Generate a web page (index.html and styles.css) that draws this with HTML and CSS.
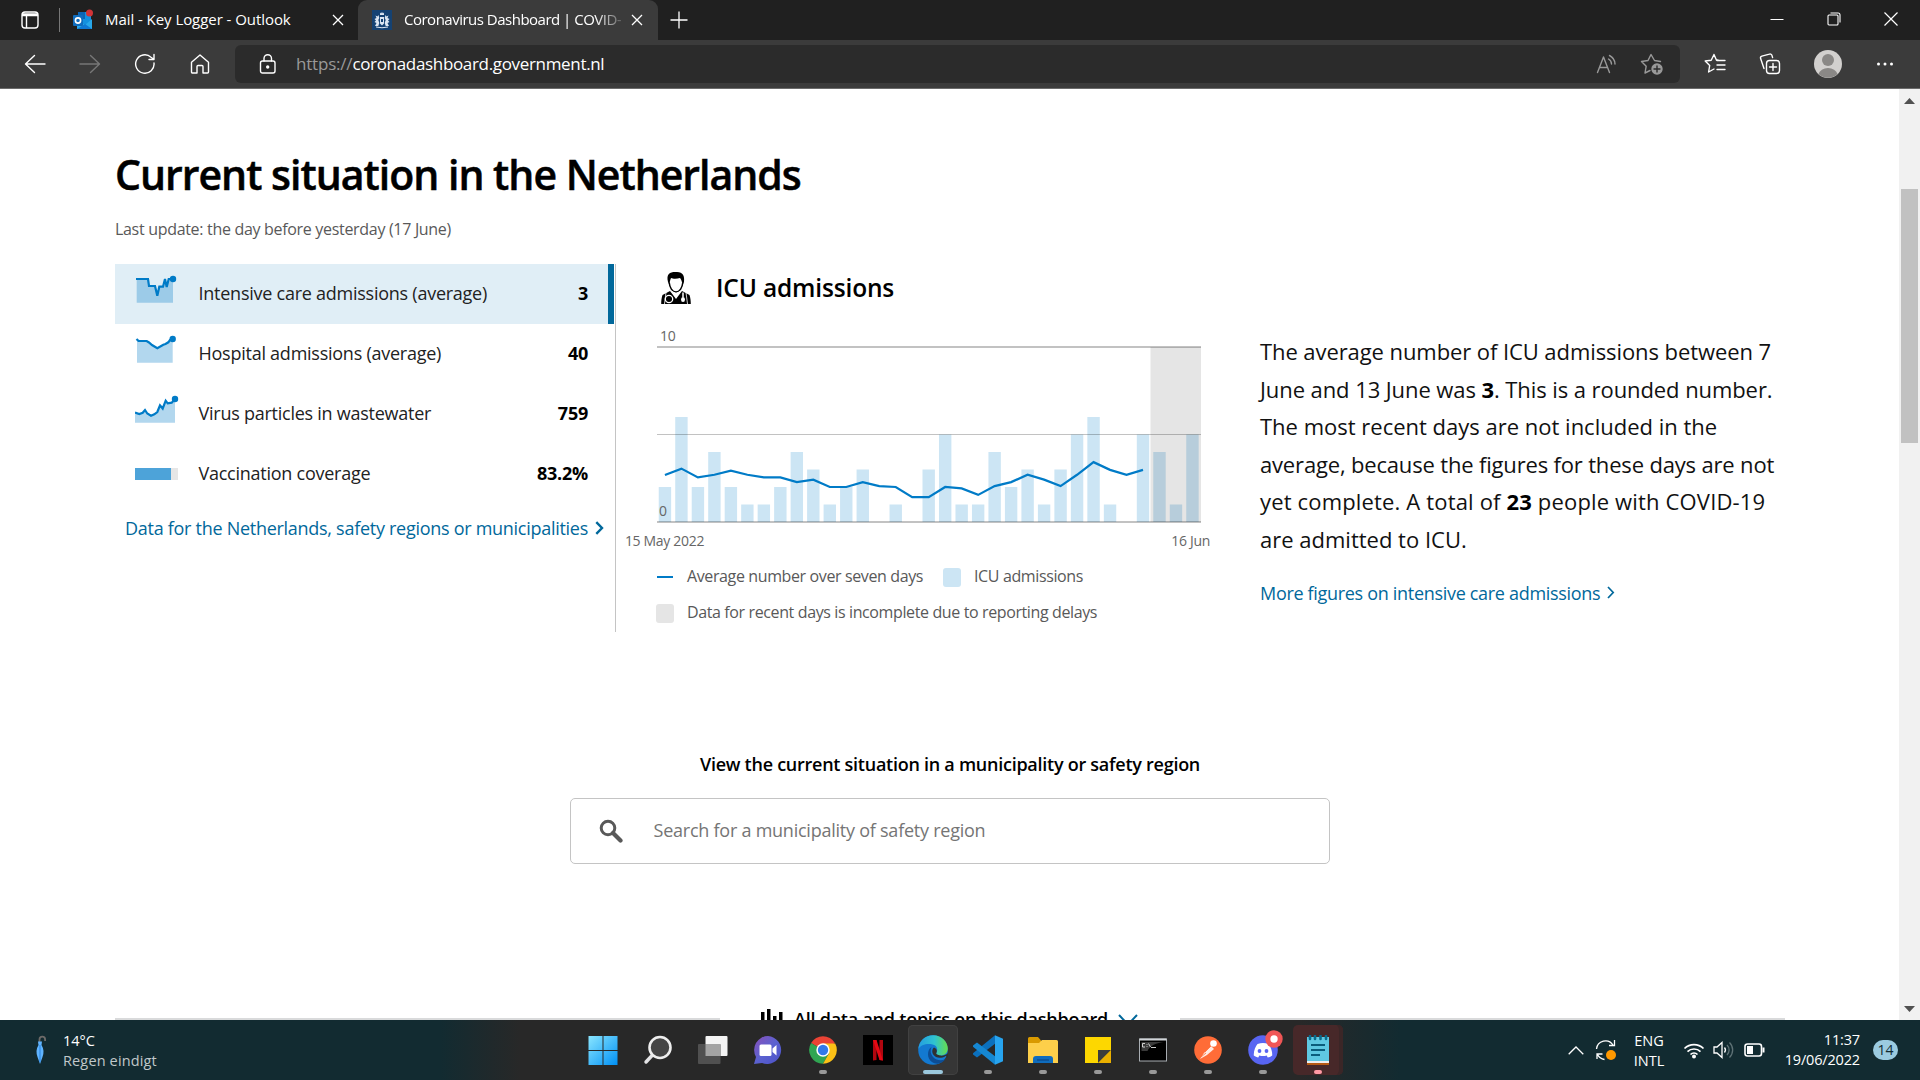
FILE: index.html
```
<!DOCTYPE html>
<html lang="en">
<head>
<meta charset="utf-8">
<title>Coronavirus Dashboard | COVID-19</title>
<link rel="stylesheet" href="styles.css">
</head>
<body>
<div class="screen">
  <header class="tabstrip">
    <div class="tabmenu"><svg width="18" height="18" viewBox="0 0 18 18" fill="none" stroke="#fff" stroke-width="1.4"><rect x="1" y="1" width="16" height="16" rx="3"/><path d="M1 4.500h16M1 3h16M5.500 5v12"/></svg></div>
    <div class="tab">
      <svg class="favicon" width="22" height="22" viewBox="0 0 22 22"><path d="M6 3h13v14H6z" fill="#1490df"/><path d="M6 3h7v7H6z" fill="#0a64b4"/><path d="M5 11l8 5 7-6v10H5z" fill="#28a8ea"/><path d="M5 20l8-5 7 5z" fill="#0f78d4"/><rect x="1" y="6" width="10" height="11" rx="1" fill="#0f6cbd"/><circle cx="6" cy="11.500" r="2.600" fill="none" stroke="#fff" stroke-width="1.600"/><circle cx="17.500" cy="4" r="3.500" fill="#d13438"/></svg>
      <span class="tab-title">Mail - Key Logger - Outlook</span>
      <svg class="close" width="12" height="12" viewBox="0 0 12 12" stroke="#fff" stroke-width="1.300"><path d="M1 1l10 10M11 1L1 11"/></svg>
    </div>
    <div class="tab active">
      <svg class="favicon" width="20" height="20" viewBox="0 0 20 20"><rect width="20" height="20" fill="#154273"/><g fill="#dce6f2"><path d="M8 2.500l1 1 1-1.500 1 1.500 1-1V5H8zM8 7h4v6.500l-2 2-2-2z"/><path d="M3.500 5.500l2 1L6.500 5l.8 3-1 2 1 3-1 3H3l1.500-3L2.500 12l1.500-1.500L2.500 9l2-1zM16.500 5.500l-2 1L13.500 5l-.8 3 1 2-1 3 1 3H17l-1.500-3 2-1-1.500-1.500L17.500 9l-2-1z"/><path d="M4 16.500l6 .8 6-.8v1l-6 .8-6-.8z"/></g><path d="M9 9h2v3H9z" fill="#154273"/></svg>
      <span class="tab-title fade">Coronavirus Dashboard | COVID-</span>
      <svg class="close" width="12" height="12" viewBox="0 0 12 12" stroke="#fff" stroke-width="1.300"><path d="M1 1l10 10M11 1L1 11"/></svg>
    </div>
    <div class="newtab"><svg width="18" height="18" viewBox="0 0 18 18" stroke="#fff" stroke-width="1.300"><path d="M9 0.500v17M0.500 9h17"/></svg></div>
    <div class="window-controls">
      <svg width="14" height="14" viewBox="0 0 14 14" stroke="#fff" fill="none"><path d="M0.500 7.500h13"/></svg>
      <svg width="14" height="14" viewBox="0 0 14 14" stroke="#fff" fill="none" stroke-width="1.100"><rect x="1" y="3" width="10" height="10" rx="1"/><path d="M3.500 1H11a2 2 0 0 1 2 2v7.500"/></svg>
      <svg width="14" height="14" viewBox="0 0 14 14" stroke="#fff" stroke-width="1.200"><path d="M0.500 0.500l13 13M13.500 0.500l-13 13"/></svg>
    </div>
  </header>

  <nav class="toolbar">
    <div class="nav">
      <svg width="22" height="20" viewBox="0 0 22 20" class="ic"><path d="M21 10H2M10.500 1.500L1.500 10l9 8.500"/></svg>
      <svg width="22" height="20" viewBox="0 0 22 20" class="ic dim"><path d="M1 10h19M11.500 1.500l9 8.500-9 8.500"/></svg>
      <svg width="22" height="22" viewBox="0 0 22 22" class="ic"><path d="M20 10a9.200 9.200 0 1 1-3-5.800L19.500 6M20 1.500V6.500h-5"/></svg>
      <svg width="22" height="22" viewBox="-1 0 22 22" class="ic"><path d="M1.500 9.300L10 2l8.500 7.300V19a1 1 0 0 1-1 1H13v-6.500a1 1 0 0 0-1-1H8a1 1 0 0 0-1 1V20H2.500a1 1 0 0 1-1-1z"/></svg>
    </div>
    <div class="address">
      <svg width="18" height="22" viewBox="0 0 18 22" class="ic"><rect x="1.500" y="8" width="14.500" height="12" rx="2"/><path d="M5 8V5.500a3.700 3.700 0 0 1 7.500 0V8"/><circle cx="8.700" cy="14" r="1" fill="#fff"/></svg>
      <span class="url"><span class="scheme">https://</span>coronadashboard.government.nl</span>
      <div class="address-icons">
        <svg width="22" height="20" viewBox="0 0 22 20" class="ic grey"><path d="M1.500 18.500L7.500 3l6 15.500M3.500 13.500h8M12.500 5a6 6 0 0 1 3 5M13.500 1.500a10 10 0 0 1 5.500 8.500"/></svg>
        <svg width="24" height="22" viewBox="0 0 24 22" class="ic grey"><path d="M20.500 8.500l-6-1L11 1.500 8 7.500l-6.500 1 4.700 4.700L5 20l5-2.500"/><circle cx="17" cy="16" r="5" fill="#999"/><path d="M17 13v6M14 16h6" stroke="#2b2b2b"/></svg>
      </div>
    </div>
    <div class="tools">
      <svg width="22" height="22" viewBox="0 0 22 22" class="ic"><path d="M14 7L12.500 7.200 10 1.500 7.200 7.200 1.200 8l4.500 4.500L4.600 19l5.400-3M13 7.500h8M13 12h8M13 16.500h8"/></svg>
      <svg width="22" height="22" viewBox="0 0 22 22" class="ic"><rect x="7.500" y="7.500" width="13" height="13" rx="3"/><path d="M14 10.500v7M10.500 14h7M5 15.500L1.600 5.600a2 2 0 0 1 1.300-2.500l7.500-2a2 2 0 0 1 2.600 1.500l.6 2"/></svg>
      <svg width="30" height="30" viewBox="0 0 30 30"><circle cx="15" cy="15" r="14" fill="#d2d0ce"/><circle cx="15" cy="11" r="6" fill="#8a8886"/><path d="M5.500 25a9.700 7.500 0 0 1 19 0 14 14 0 0 1-19 0z" fill="#8a8886"/></svg>
      <svg width="18" height="6" viewBox="0 0 18 6" fill="#fff"><circle cx="2.500" cy="3" r="1.500"/><circle cx="9" cy="3" r="1.500"/><circle cx="15.500" cy="3" r="1.500"/></svg>
    </div>
  </nav>

  <div class="viewport">
    <main class="page">
      <h1>Current situation in the Netherlands</h1>
      <p class="updated">Last update: the day before yesterday (17 June)</p>
      <section class="overview">
        <div class="topics">
          <a class="topic selected">
            <svg width="45" height="60" viewBox="0 -10 45 60"><path d="M1.700 5H13l1 7h6l2.300 9.700 2-9H28L30 5l1.700 8 2-8H38v23.700H1.700z" fill="#007bc7" fill-opacity=".3"/><path class="spark" d="M1 5H13l1 7h6l2.300 9.700 2-9H28L30 5l1.700 8 2-8H38"/><circle cx="38" cy="5" r="3.200" fill="#007bc7"/></svg>
            <span>Intensive care admissions (average)</span><b>3</b>
          </a>
          <a class="topic">
            <svg width="45" height="60" viewBox="0 -10 45 60"><path d="M2 5.500V28.700H37.700V5L33 8.300 28.300 10.700 22.300 14.300 16.700 11 11.700 7z" fill="#007bc7" fill-opacity=".3"/><path class="spark" d="M1.500 5L3.500 7 11.700 7 14 8.500 17 11 22.300 14.300 28.300 10.700 30.500 10 33.300 8.300 35 6 37.700 5"/><circle cx="37.700" cy="5" r="3.200" fill="#007bc7"/></svg>
            <span>Hospital admissions (average)</span><b>40</b>
          </a>
          <a class="topic">
            <svg width="45" height="60" viewBox="0 -10 45 60"><path d="M0 19.300L4.300 20 7.700 18.500 10 16 12.300 19.500 16 21.700 19.300 20.300 22.300 17.700 25 11.300 27.700 14.300 30.700 6.700 32.700 9.300 36.700 8.700 40 5V28.700H0z" fill="#007bc7" fill-opacity=".3"/><path class="spark" d="M0 18.500L4.300 20 7.700 18.700 10 16 12.300 19.500 16 21.700 19.300 20.300 22.300 18 25 11.300 27.700 14.500 30.700 6.700 32.700 9.300 36.700 8.700 40 5"/><circle cx="40" cy="5" r="3.200" fill="#007bc7"/></svg>
            <span>Virus particles in wastewater</span><b>759</b>
          </a>
          <a class="topic">
            <svg width="45" height="60" viewBox="0 -10 45 60"><rect y="14" width="43" height="12" fill="#e6e6e6"/><rect y="14" width="36" height="12" fill="#4da3d9"/></svg>
            <span>Vaccination coverage</span><b>83.2%</b>
          </a>
          <a class="link all-data">Data for the Netherlands, safety regions or municipalities<svg width="9" height="14" viewBox="0 0 9 14" fill="none" stroke="#01689b" stroke-width="2.400"><path d="M1.300 1.200L7 7l-5.700 5.800"/></svg></a>
        </div>

        <div class="chart-column">
          <h2>
            <svg width="30" height="34" viewBox="0 0 30 34"><path d="M7 11C5 3 9 1 14 1c6 0 10 1 9 10l-1.500 3C21 10 20 8 19 7c-3 1-7 1-9 0-1 2-1.500 5-1.500 7z"/><path d="M8.200 11.500c.5 5 3 9.500 6.800 9.500s6.300-4.500 6.800-9.500" fill="none" stroke="#000" stroke-width="1.500"/><path d="M9 20L1.500 24C0.500 27 .2 30 .2 33h29.600c0-3-.3-6-1.300-9L21 20l-6 8z"/><path d="M11 20.500l4 5 4-5-4 2z" fill="#fff" stroke="#fff"/><path d="M5 21.500L3.500 33M25 21.500l1.500 11.500" stroke="#fff" stroke-width=".8"/><circle cx="8" cy="28" r="3.700" fill="#000" stroke="#fff" stroke-width="1.300"/><ellipse cx="22" cy="28.500" rx="2" ry="2.600" fill="#fff"/><path d="M22 21.500v5" stroke="#fff" stroke-width="1.500"/></svg>
            <span>ICU admissions</span>
          </h2>
          <svg class="chart" width="544" height="240" viewBox="657 320 544 240">
            <g id="bars" fill="#cce5f4"></g>
            <rect x="1150.500" y="347" width="50.500" height="175" fill="#000" fill-opacity=".1"/>
            <g stroke="#000" stroke-opacity=".24"><path d="M657 347h544" stroke-width="2"/><path d="M657 434.500h544"/><path d="M657 522h544" stroke-width="2"/></g>
            <polyline id="average" fill="none" stroke="#007bc7" stroke-width="2.200"/>
            <g class="axis"><text x="660" y="341">10</text><text x="659" y="516">0</text><text x="664.500" y="546" text-anchor="middle">15 May 2022</text><text x="1210" y="546" text-anchor="end">16 Jun</text></g>
          </svg>
          <ul class="legend">
            <li><i class="line"></i>Average number over seven days</li>
            <li><i class="box blue"></i>ICU admissions</li>
            <li><i class="box"></i>Data for recent days is incomplete due to reporting delays</li>
          </ul>
        </div>

        <div class="summary">
          <p><span class="snug">The average number of ICU admissions between 7</span><br><span class="snug">June and 13 June was <b>3</b>. This is a rounded number.</span><br>The most recent days are not included in the<br><span class="tight">average, because the figures for these days are not</span><br><span class="loose">yet complete. A total of <b>23</b> people with COVID-19</span><br>are admitted to ICU.</p>
          <a class="link">More figures on intensive care admissions<svg width="8" height="13" viewBox="0 0 8 13" fill="none" stroke="#01689b" stroke-width="1.700"><path d="M1 1l5.200 5.500L1 12"/></svg></a>
        </div>
      </section>

      <section class="search">
        <h3>View the current situation in a municipality or safety region</h3>
        <div class="searchbox">
          <svg width="24" height="24" viewBox="0 0 24 24" fill="none" stroke="#595959"><circle cx="9" cy="9" r="6.800" stroke-width="3"/><path d="M14 14l7.500 7.500" stroke-width="4.200" stroke-linecap="round"/></svg>
          <span>Search for a municipality of safety region</span>
        </div>
      </section>

      <section class="all-topics">
        <hr>
        <div class="toggle">
          <svg width="24" height="26" viewBox="0 0 24 26"><path d="M1 4h3.500v20H1zM7 1h3.500v23H7zM13 8h3.500v16H13zM19 4h3.500v20H19z"/></svg>
          <span>All data and topics on this dashboard</span>
          <svg class="down" width="20" height="13" viewBox="0 0 20 13" fill="none" stroke="#01689b" stroke-width="2"><path d="M1 1l9 9.500L19 1"/></svg>
        </div>
        <hr>
      </section>
    </main>
    <aside class="scrollbar">
      <svg width="11" height="6" viewBox="0 0 11 6"><path d="M5.500 0L11 6H0z" fill="#505050"/></svg>
      <div class="thumb"></div>
      <svg width="11" height="6" viewBox="0 0 11 6"><path d="M5.500 6L0 0h11z" fill="#505050"/></svg>
    </aside>
  </div>

  <footer class="taskbar">
    <div class="weather">
      <svg width="12" height="30" viewBox="0 0 12 30"><path d="M4.500 9V4.500a2.800 2.800 0 0 1 5.600 0V6" fill="none" stroke="#6d6a68" stroke-width="1.800"/><path d="M3 6.500h4l-.5 3.500C9 14 9 18 7.500 22L5 29 2.500 22C1 18 1 14 3.500 10z" fill="#60b4ff"/><path d="M5 10v17" stroke="#2f8be6" stroke-width="1.200"/></svg>
      <div><span>14°C</span><span class="muted">Regen eindigt</span></div>
    </div>
    <div class="apps">
      <div class="app"><svg viewBox="0 0 30 30"><defs><linearGradient id="win" x2="1" y2="1"><stop stop-color="#8ae6ff"/><stop offset="1" stop-color="#0090f5"/></linearGradient></defs><path d="M.5 1h14v14H.5zM15.500 1h14v14h-14zM.5 16h14v14H.5zM15.500 16h14v14h-14z" fill="url(#win)"/></svg></div>
      <div class="app"><svg viewBox="0 0 30 30"><path d="M10 19.500L3 27" stroke="#e4e4e6" stroke-width="3.400" stroke-linecap="round"/><circle cx="17" cy="12.500" r="10.500" fill="#454545" stroke="#eee" stroke-width="2.600"/></svg></div>
      <div class="app"><svg viewBox="0 0 30 30"><rect x="7.500" y="1" width="22" height="20" rx="1" fill="#f4f4f4"/><rect x="0" y="9" width="22.500" height="20" rx="1" fill="#505050"/><rect x="7.500" y="9" width="15" height="12" fill="#a4a4a4"/></svg></div>
      <div class="app"><svg viewBox="0 0 30 30"><defs><linearGradient id="chat" x2="1" y2="1"><stop stop-color="#8a4fb8"/><stop offset=".5" stop-color="#5b62d0"/><stop offset="1" stop-color="#4b50c8"/></linearGradient></defs><path d="M15 1a14 14 0 1 1-6 27L1 29l2-7A14 14 0 0 1 15 1z" fill="url(#chat)"/><rect x="6.500" y="9.500" width="12" height="11.500" rx="1.500" fill="#fff"/><path d="M19.500 13.500l4-3.500v10.500l-4-3.500z" fill="#fff"/></svg></div>
      <div class="app run"><svg viewBox="0 0 30 30"><path d="M15 15L3.100 8a13.800 13.800 0 0 1 23.800 0z" fill="#ea4335"/><path d="M15 15L3.100 8A13.800 13.800 0 0 0 15 28.800l6-10.500z" fill="#30a552"/><path d="M15 8.500h12.200A13.800 13.800 0 0 1 15 28.800l6-10.500z" fill="#fbc116"/><circle cx="15" cy="15" r="6.700" fill="#fff"/><circle cx="15" cy="15" r="5.200" fill="#3279ea"/></svg></div>
      <div class="app"><svg viewBox="0 0 30 30"><rect width="30" height="30" fill="#000"/><path d="M10 5h3.500v20l-3.500.5zM16.500 5H20v20.500l-3.500-.5z" fill="#b1060f"/><path d="M10 5h3.500L20 25.500l-3.500-.5z" fill="#e50914"/></svg></div>
      <div class="app run current"><svg viewBox="0 0 30 30"><defs><linearGradient id="edge" x2="1"><stop stop-color="#249de0"/><stop offset=".55" stop-color="#2fc3d0"/><stop offset="1" stop-color="#66dd4c"/></linearGradient></defs><circle cx="15" cy="15" r="14.800" fill="#1379d1"/><path d="M.3 14C1.500 5 7.500.2 15.200.2 24 .2 29.800 7 29.800 13.500c0 4.500-3.500 7-7.300 7-3 0-5-1-4-2.800 1.500-2.500 1-7.200-4-8.200C9 8 2.500 10 .3 14z" fill="url(#edge)"/><path d="M13.500 12c-4.500 3-5 11 .5 15 5 3.500 11 1 13.500-3-4 2-9 1.500-12-1.500s-3.500-6.500-2-10.500z" fill="#0d4d94"/><path d="M16 12.500c-3 2.500-2 7.500 2 9.500 3 1.300 6.500.8 9.300-.8 1-.5 1.800.2 1 1.300l3-.5-1-4c-2 2-5.500 3-8.300 2.500-3-.5-4.500-1.500-3.500-3 .8-1.500.3-4-2.500-5z" fill="#303030"/></svg></div>
      <div class="app run"><svg viewBox="0 0 30 30"><path d="M22 .2l8 3.500v22.600l-8 3.500z" fill="#27a4ef"/><path d="M22 .2v8.600L4 22.500 0 19.500V18.300z" fill="#0b70bd"/><path d="M22 29.800v-8.600L4 7.500 0 10.500v1.200z" fill="#1587d2"/></svg></div>
      <div class="app run"><svg viewBox="0 0 30 30"><path d="M0 3.500A1.500 1.500 0 0 1 1.500 2H10l3 3.500V10H0z" fill="#d99a00"/><path d="M0 8h11l3-3h14.500A1.500 1.500 0 0 1 30 6.500V28H0z" fill="#fdcf4a"/><path d="M5 28v-4a3 3 0 0 1 3-3h14a3 3 0 0 1 3 3v4z" fill="#0f6cbd"/><path d="M9 25h12" stroke="#0a3f7d"/></svg></div>
      <div class="app run"><svg viewBox="0 0 30 30"><path d="M2 2h26v13L15 28H2z" fill="#fdd700"/><path d="M15 15h13L15 28z" fill="#3c3c3c"/><path d="M28 15v13H15z" fill="#eab000"/></svg></div>
      <div class="app run"><svg viewBox="0 0 30 30"><rect x="1.500" y="4" width="27" height="22" fill="#000" stroke="#a8adb2"/><path d="M1.500 4.500h27" stroke="#d0d4d8" stroke-width="2"/><path d="M3.500 7h22c-8 1-14 4-16 9h-6z" fill="#3a3a3a"/><path d="M7 8.500H4.500V12H7M9 9v.8M9 11.200v.8M10.500 8.500l2 3.500M13 12.500h5" fill="none" stroke="#e0e0e0" stroke-width=".9"/></svg></div>
      <div class="app run"><svg viewBox="0 0 30 30"><circle cx="15" cy="15" r="13.800" fill="#ff6c37"/><path d="M7 24l4-6 7-7 3 3-7 6z" fill="#fff" opacity=".85"/><circle cx="20.500" cy="8.500" r="3.300" fill="#fff"/><path d="M18 11l-6 6M8 22l5-4" stroke="#ff6c37" stroke-width=".8"/></svg></div>
      <div class="app run"><svg viewBox="0 0 30 30" overflow="visible"><circle cx="15" cy="15" r="14.800" fill="#5865f2"/><path d="M9.500 9c4-1.500 7-1.500 11 0 2 2.500 4 7 3.700 11.500-1.500 1.200-3 1.800-4.500 2l-1-2c-2.500.8-5 .8-7.400 0l-1 2c-1.500-.2-3-.8-4.500-2C5.500 16 7.500 11.500 9.500 9z" fill="#fff"/><circle cx="11.500" cy="16" r="1.900" fill="#5865f2"/><circle cx="18.500" cy="16" r="1.900" fill="#5865f2"/><circle cx="26" cy="4" r="8.700" fill="#f05656"/><circle cx="26" cy="4" r="3.700" fill="#fff"/></svg></div>
      <div class="app run alert"><svg viewBox="0 0 30 30"><path d="M4 26h22v4H4z" fill="#b65a14"/><path d="M4 2h22v25H4z" fill="#5fc8e2"/><path d="M4 26h22v2H4z" fill="#eee"/><path d="M8 10h14M8 15h14M8 20h9" stroke="#0b5d7c" stroke-width="2"/><path d="M7 1v3M12 1v3M17.500 1v3M23 1v3" stroke="#086b8d" stroke-width="2.600" stroke-linecap="round"/></svg></div>
    </div>
    <div class="tray">
      <svg class="w34" width="16" height="9" viewBox="0 0 16 9"><path d="M.7 8.300L8 1l7.300 7.300"/></svg>
      <svg class="w26" width="22" height="22" viewBox="0 0 22 22"><path d="M1.500 10A9 9 0 0 1 18 6M19.500 1v5.500H14M2 20v-5h5.500M2.500 15.500c1.500 3 4 4.500 7 5"/><circle cx="16" cy="16" r="5" fill="#ff9800" stroke="none"/></svg>
      <div class="lang"><span>ENG</span><span>INTL</span></div>
      <svg class="w30" width="22" height="17" viewBox="0 0 22 17"><g stroke-width="1.700"><path d="M1.500 6.500a13.500 13.500 0 0 1 19 0M4.500 9.700a9.200 9.200 0 0 1 13 0M7.500 12.500a5 5 0 0 1 7 0"/></g><circle cx="11" cy="14.500" r="2" fill="#fff" stroke="none"/></svg>
      <svg class="w29" width="21" height="18" viewBox="0 0 21 18"><path d="M1 6h3l5-4.500v15L4 12H1z"/><path d="M11.500 6.500a4 4 0 0 1 0 5"/><g stroke="#5f7276"><path d="M14 4a7 7 0 0 1 0 10M16.500 1.500a10.500 10.500 0 0 1 0 15"/></g></svg>
      <svg class="w33" width="21" height="14" viewBox="0 0 21 14"><rect x="1" y="1" width="16.500" height="12" rx="2.500" stroke-width="1.600"/><rect x="3" y="3" width="6" height="8" fill="#fff" stroke="none"/><path d="M19.500 4.500v5" stroke-width="2"/></svg>
      <div class="clock"><span>11:37</span><span>19/06/2022</span></div>
      <div class="badge">14</div>
    </div>
  </footer>
</div>
<script src="chart.js"></script>
</body>
</html>
```
FILE: styles.css
```
* { box-sizing: border-box; }
body { margin: 0; background: #fff; font-family: "Open Sans", "Noto Sans", sans-serif; color: #000; }
h1, h2, h3, p, ul, hr { margin: 0; padding: 0; }
svg { flex: none; display: block; }
.screen { width: 1920px; height: 1080px; overflow: hidden; display: flex; flex-direction: column; }

/* browser chrome */
.tabstrip { height: 40px; flex: none; background: #202020; display: flex; align-items: stretch; color: #fff; font-size: 15px; line-height: 38px; white-space: nowrap; }
.tabmenu { width: 60px; padding: 11px 0 0 21px; background: linear-gradient(#777, #777) right 8px / 1px 24px no-repeat; }
.tab { width: 298px; display: flex; align-items: center; padding: 0 14px 0 12px; }
.tab .favicon { margin-right: 11px; }
.tab .close { margin-left: auto; }
.tab-title { width: 190px; height: 40px; letter-spacing: -.06px; }
.tab.active { width: 300px; background: #3b3b3b; border-radius: 9px 9px 0 0; padding-left: 14px; padding-right: 15px; }
.tab.active .favicon { margin-right: 12px; }
.tab-title.fade { width: 217px; letter-spacing: -.5px; -webkit-mask-image: linear-gradient(90deg, #000 88%, transparent 103%); mask-image: linear-gradient(90deg, #000 88%, transparent 103%); }
.newtab { padding: 11px 0 0 12px; }
.window-controls { margin-left: auto; display: flex; align-items: center; gap: 43px; padding: 0 22px 2px 0; }
.toolbar { height: 49px; flex: none; background: #3b3b3b; border-bottom: 1px solid #6b6b6b; display: flex; padding-top: 5px; }
.ic { fill: none; stroke: #fff; stroke-width: 1.4; stroke-linejoin: round; stroke-linecap: round; }
.ic.dim { stroke: #777; }
.ic.grey { stroke: #999; }
.nav { width: 235px; height: 37px; display: flex; align-items: center; gap: 33px; padding-left: 24px; }
.address { width: 1445px; height: 38px; background: #2b2b2b; border-radius: 6px; display: flex; align-items: center; padding: 0 16px 0 24px; }
.url { margin-left: 19px; color: #fff; font-size: 17px; line-height: 38px; letter-spacing: -.33px; }
.scheme { color: #999; letter-spacing: -.2px; }
.address-icons { margin-left: auto; display: flex; align-items: center; gap: 22px; }
.tools { display: flex; align-items: center; height: 38px; padding-left: 24px; }
.tools svg:nth-child(1) { margin-right: 33px; }
.tools svg:nth-child(2) { margin-right: 32px; }
.tools svg:nth-child(3) { margin-right: 33px; }

/* page */
.viewport { height: 931px; flex: none; display: flex; overflow: hidden; }
.page { width: 1899px; padding: 60px 114px 0 115px; }
h1 { font-size: 41px; line-height: 50px; font-weight: 600; letter-spacing: -.99px; -webkit-text-stroke: .5px #000; }
.updated { margin-top: 18px; font-size: 16px; line-height: 24px; color: #595959; letter-spacing: -.31px; }
.overview { margin-top: 23px; height: 368px; display: flex; }
.topics { width: 501px; border-right: 1px solid #c4c4c4; }
.topic { width: 499px; height: 60px; display: flex; padding: 0 26px 0 20px; font-size: 18px; line-height: 58px; letter-spacing: -.25px; color: #222; }
.topic b { margin-left: auto; color: #000; font-weight: 700; }
.topic span { margin-left: 18.5px; }
.topic.selected { background: #e0eef6; border-right: 6px solid #01689b; padding-right: 20px; }
.spark { fill: none; stroke: #007bc7; stroke-width: 2.2; }
.link { display: flex; align-items: center; color: #01689b; font-size: 18px; line-height: 30px; letter-spacing: -.28px; white-space: nowrap; }
.link svg { margin-left: 7px; }
.all-data { margin: 9px 0 0 10px; }
.chart-column { width: 585px; padding: 4px 0 0 41px; }
h2 { display: flex; height: 52px; padding: 3px 0 0 4px; font-size: 24.5px; line-height: 33px; font-weight: 600; letter-spacing: -.16px; }
h2 span { margin-left: 25px; }
.chart { overflow: visible; }
.axis { font-size: 14px; letter-spacing: -.32px; fill: #666; }
.legend { list-style: none; display: flex; flex-wrap: wrap; gap: 12px 20px; margin-top: 4px; font-size: 16px; line-height: 24px; letter-spacing: -.38px; color: #595959; white-space: nowrap; }
.legend li { display: flex; }
.legend i { flex: none; }
.line { width: 16px; height: 2px; margin: 12px 14px 0 0; background: #007bc7; }
.box { width: 18px; height: 19px; margin: 4px 13px 0 -1px; border-radius: 3px; background: #e5e5e5; }
.box.blue { background: #cce5f4; margin-left: 0; }
.summary { padding: 69px 0 0 59px; }
.summary p { font-size: 22px; line-height: 37.6px; white-space: nowrap; color: #111; }
.summary p b { color: #000; }
.snug { letter-spacing: -.08px; }
.tight { letter-spacing: -.17px; }
.loose { letter-spacing: .16px; }
.summary .link { margin-top: 19px; letter-spacing: -.31px; }
.search { margin-top: 117px; display: flex; flex-direction: column; align-items: center; }
h3 { font-size: 18px; line-height: 30px; font-weight: 600; letter-spacing: -.26px; }
.searchbox { width: 760px; height: 66px; margin: 19px 0 0 0; border: 1px solid #c4c4c4; border-radius: 5px; display: flex; align-items: center; padding-left: 28px; font-size: 18px; letter-spacing: -.24px; color: #757575; }
.searchbox span { margin-left: 30.5px; padding-bottom: 2px; }
.all-topics { margin-top: 135px; display: flex; justify-content: space-between; }
hr { width: 605px; height: 2px; margin-top: 19px; border: 0; background: #d9dadb; }
.toggle { display: flex; font-size: 18px; font-weight: 600; line-height: 38px; letter-spacing: -.23px; padding-top: 1px; white-space: nowrap; }
.toggle svg { margin: 8px 10px 0 0; }
.toggle .down { margin: 14px 2px 0 10px; }
.scrollbar { width: 21px; background: #f1f1f1; display: flex; flex-direction: column; align-items: center; padding: 9px 0 8px; }
.thumb { width: 17px; height: 254px; background: #c1c1c1; margin: 85px 0 auto; }

/* taskbar */
.taskbar { height: 60px; flex: none; display: grid; grid-template-columns: 575px 770px 575px; background: linear-gradient(90deg, #122b31 0, #122b31 440px, #282828 520px, #282828 1300px, #122b31 1400px); color: #fff; font-size: 14.500px; line-height: 20px; white-space: nowrap; }
.weather { display: flex; padding: 11px 0 0 35px; }
.weather svg { margin: 4px 16px 0 0; }
.weather span, .lang span, .clock span { display: block; }
.weather .muted { color: #c0c8ca; letter-spacing: .14px; }
.apps { display: grid; grid-template-columns: repeat(14, 55px); }
.app { height: 50px; width: 50px; margin: 5px 0 0 2.500px; padding: 10px 10px 0; border-radius: 5px; }
.app svg { width: 30px; height: 30px; }
.run::after { content: ""; display: block; width: 8px; height: 4px; border-radius: 2px; margin: 5px auto 0; background: #999; }
.current { background: #363636; box-shadow: inset 0 0 0 1px #414141; }
.current::after { width: 20px; background: #9bc8dd; }
.alert { background: #472829; box-shadow: inset -5px 0 0 -1px #3b2627; }
.alert::after { background: #ff99a4; }
.tray { display: flex; align-items: center; padding-left: 214px; }
.tray > svg { fill: none; stroke: #fff; stroke-width: 1.3; }
.w34 { width: 34px; } .w26 { width: 26px; } .w30 { width: 30px; } .w29 { width: 29px; } .w33 { width: 33px; }
.lang { width: 60px; text-align: center; padding-top: 2px; }
.clock { width: 89px; text-align: right; letter-spacing: -.16px; }
.badge { width: 25px; height: 20px; margin-left: 13px; border-radius: 10px; background: #9bcbe0; color: #122b31; font-size: 14px; line-height: 20px; text-align: center; }
```
FILE: chart.js
```
const admissions = [2, 6, 2, 4, 2, 1, 1, 2, 4, 3, 1, 2, 3, 0, 1, 0, 3, 5, 1, 1, 4, 2, 3, 1, 3, 5, 6, 1, 0, 5, 4, 1, 5];
const average = [2.68, 3.05, 2.55, 2.70, 2.93, 2.70, 2.55, 2.55, 2.28, 2.42, 2.00, 2.00, 2.28, 2.05, 2.00, 1.42, 1.42, 2.00, 1.92, 1.55, 2.05, 2.28, 2.70, 2.42, 2.05, 2.70, 3.42, 2.98, 2.70, 2.98];
const left = 657, bottom = 522, unit = 17.5, step = 544 / 33;
const center = i => left + step * (i + 0.5) - 0.3;
const bars = document.getElementById('bars');
admissions.forEach((value, i) => {
  const bar = document.createElementNS('http://www.w3.org/2000/svg', 'rect');
  bar.setAttribute('x', center(i) - 6.2);
  bar.setAttribute('y', bottom - value * unit);
  bar.setAttribute('width', 12.4);
  bar.setAttribute('height', value * unit);
  bars.append(bar);
});
document.getElementById('average').setAttribute('points', average.map((v, i) => center(i) + ',' + (bottom - v * unit)).join(' '));
```
